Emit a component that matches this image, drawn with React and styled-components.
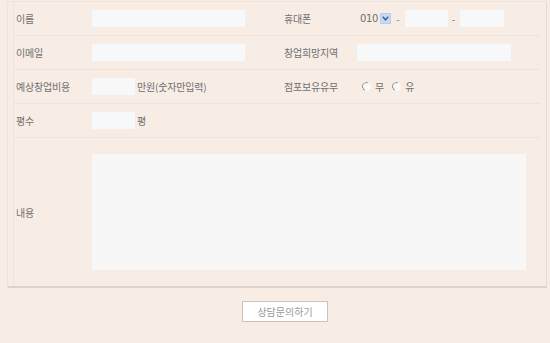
import React from "react";
import styled, { createGlobalStyle } from "styled-components";

const Global = createGlobalStyle`
  html, body { margin: 0; padding: 0; background: #f7ede5; }
  body {
    font-family: "Noto Sans CJK KR", "Noto Sans", sans-serif;
    font-size: 10px;
    color: #707070;
    width: 550px;
    height: 343px;
    overflow: hidden;
  }
`;

const Page = styled.div`
  padding-top: 1px;
`;

const Panel = styled.div`
  margin-left: 7px;
  width: 540px;
  border: 1px solid #efe3da;
  border-right-color: #e6d9cf;
  border-bottom: 2px solid #dad4cf;
  padding: 0 6px;
  box-sizing: border-box;
`;

const Row = styled.div`
  display: grid;
  grid-template-columns: ${(p) => (p.$full ? "78px 1fr" : "78px 190px 75px 1fr")};
  align-items: center;
  box-sizing: border-box;
  height: ${(p) => p.$h}px;
  border-bottom: ${(p) => (p.$last ? "none" : "1px solid #eee2d9")};
  border-left: 1px solid #f0e5dd;
  margin-left: -1px;
`;

const Label = styled.div`
  padding-left: 2px;
  white-space: nowrap;
  line-height: 13px;
  letter-spacing: -0.2px;
`;

const Value = styled.div`
  display: flex;
  align-items: center;
  white-space: nowrap;
  line-height: 13px;
`;

const Field = styled.input`
  width: ${(p) => p.$w}px;
  height: 17px;
  border: none;
  outline: none;
  padding: 0;
  margin: 0;
  background: #f7f8f9;
  box-sizing: border-box;
`;

const Unit = styled.span`
  margin-left: 2px;
  letter-spacing: -0.2px;
`;

const SelectBox = styled.span`
  display: inline-flex;
  align-items: center;
  margin-left: 3px;
  font-family: "DejaVu Sans", sans-serif;
  font-size: 10px;
  letter-spacing: -0.3px;
`;

const Arrow = styled.span`
  display: inline-flex;
  align-items: center;
  justify-content: center;
  width: 11px;
  height: 11px;
  margin-left: 2px;
  background: #c9d9f2;
  border: 1px solid #b9cdef;
  box-sizing: border-box;
`;

const Dash = styled.span`
  margin: 0 ${(p) => p.$r}px 0 ${(p) => p.$l}px;
  color: #777;
`;

const Radio = styled.span`
  display: inline-block;
  width: 9px;
  height: 9px;
  border-radius: 50%;
  background: #fbfaf9;
  border: 1px solid transparent;
  border-left-color: #888;
  border-top-color: #999;
  box-sizing: border-box;
  margin: 0 4px 0 ${(p) => p.$ml}px;
  transform: rotate(-20deg);
`;

const Area = styled.textarea`
  width: 434px;
  height: 116px;
  border: none;
  outline: none;
  resize: none;
  padding: 0;
  margin: 0;
  background: #f7f7f7;
  display: block;
`;

const Actions = styled.div`
  display: flex;
  justify-content: center;
  padding: 13px 0 0 20px;
`;

const Button = styled.button`
  width: 86px;
  height: 21px;
  background: #fff;
  border: 1px solid #c9c2bd;
  color: #999;
  font-family: "Noto Sans CJK KR", "Noto Sans", sans-serif;
  font-size: 10px;
  padding: 0;
  cursor: pointer;
`;

export default function App() {
  return (
    <Page>
      <Global />
      <Panel>
        <Row $h={34}>
          <Label>이름</Label>
          <Value><Field $w={153} /></Value>
          <Label>휴대폰</Label>
          <Value>
            <SelectBox>
              010
              <Arrow>
                <svg width="7" height="5" viewBox="0 0 7 5">
                  <path d="M0.8 0.8 L3.5 3.8 L6.2 0.8" fill="none" stroke="#3b5ea6" strokeWidth="1.5" />
                </svg>
              </Arrow>
            </SelectBox>
            <Dash $l={5} $r={5}>-</Dash>
            <Field $w={43} />
            <Dash $l={4} $r={5}>-</Dash>
            <Field $w={44} />
          </Value>
        </Row>
        <Row $h={34}>
          <Label>이메일</Label>
          <Value><Field $w={153} /></Value>
          <Label>창업희망지역</Label>
          <Value><Field $w={154} /></Value>
        </Row>
        <Row $h={34}>
          <Label>예상창업비용</Label>
          <Value><Field $w={43} /><Unit>만원(숫자만입력)</Unit></Value>
          <Label>점포보유유무</Label>
          <Value>
            <Radio $ml={5} /><span>무</span>
            <Radio $ml={8} /><span>유</span>
          </Value>
        </Row>
        <Row $h={34}>
          <Label>평수</Label>
          <Value><Field $w={43} /><Unit>평</Unit></Value>
          <Label />
          <Value />
        </Row>
        <Row $full $last $h={148}>
          <Label>내용</Label>
          <Value><Area /></Value>
        </Row>
      </Panel>
      <Actions>
        <Button>상담문의하기</Button>
      </Actions>
    </Page>
  );
}
